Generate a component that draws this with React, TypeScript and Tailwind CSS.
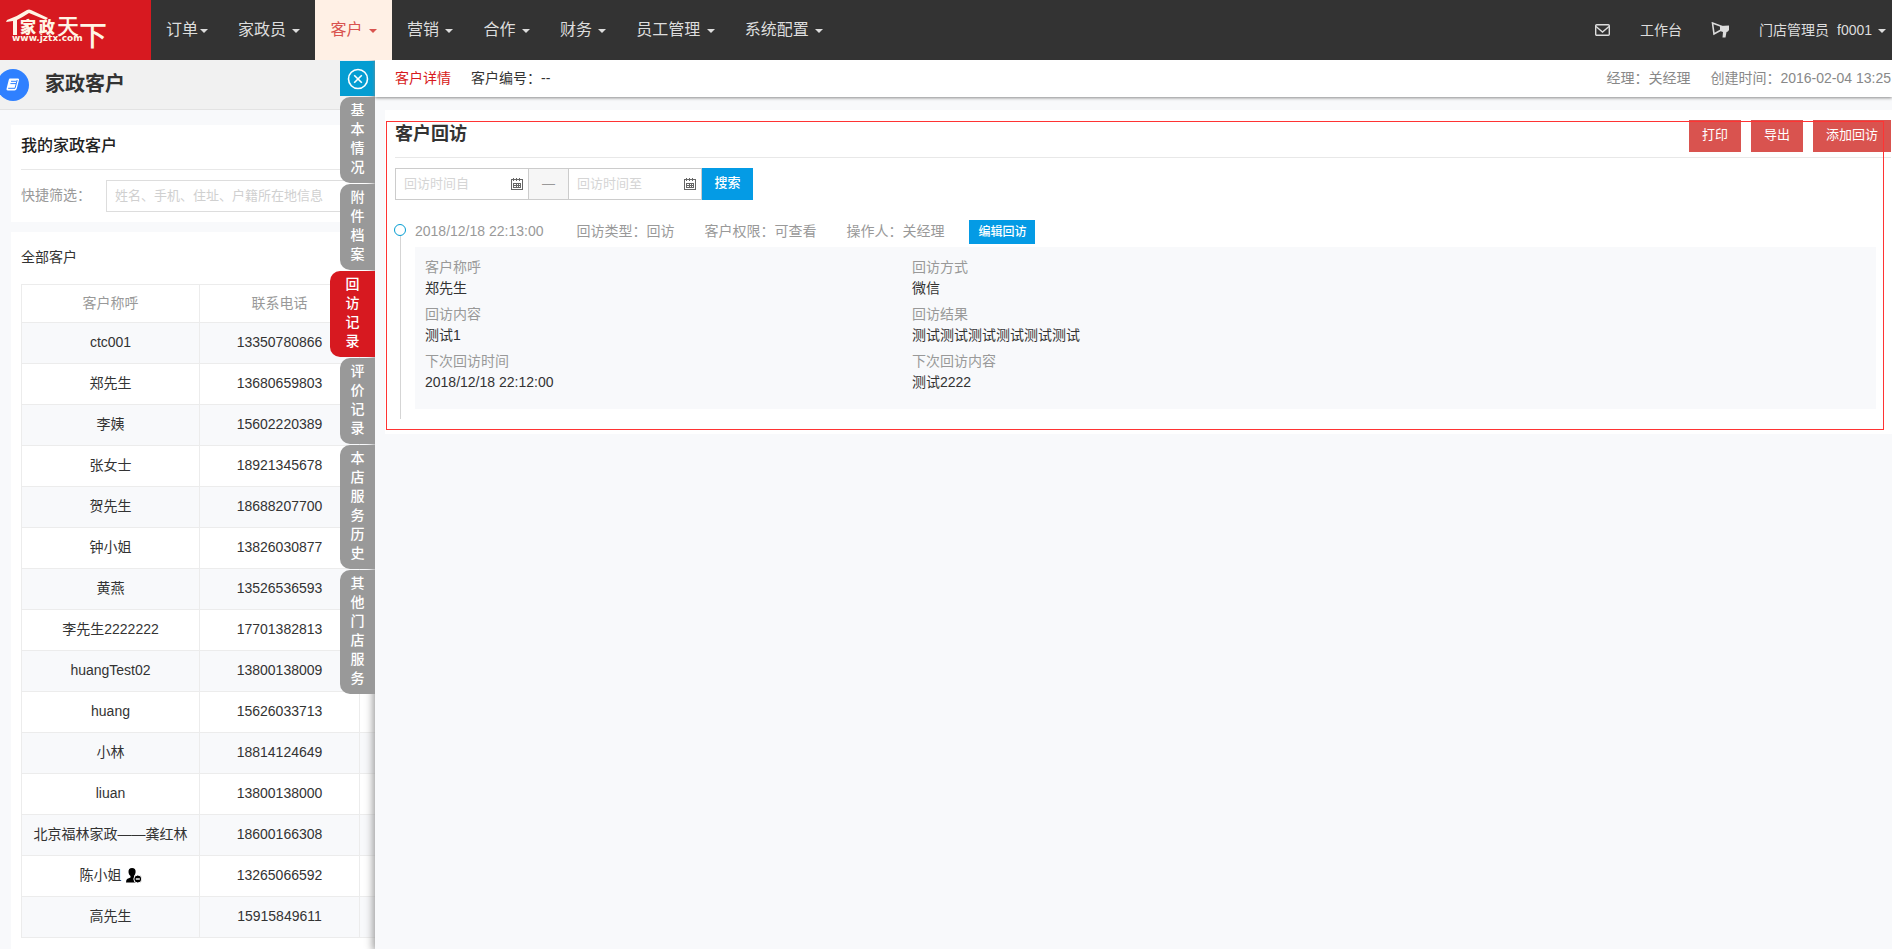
import React, { FC, ReactNode, useState } from "react";
import cx from "clsx";

interface Customer {
  name: string;
  phone: string;
  removed?: boolean;
}

const menus = ["订单", "家政员", "客户", "营销", "合作", "财务", "员工管理", "系统配置"];

const tabs = ["基本情况", "附件档案", "回访记录", "评价记录", "本店服务历史", "其他门店服务"];

const customers: Customer[] = [
  { name: "ctc001", phone: "13350780866" },
  { name: "郑先生", phone: "13680659803" },
  { name: "李姨", phone: "15602220389" },
  { name: "张女士", phone: "18921345678" },
  { name: "贺先生", phone: "18688207700" },
  { name: "钟小姐", phone: "13826030877" },
  { name: "黄燕", phone: "13526536593" },
  { name: "李先生2222222", phone: "17701382813" },
  { name: "huangTest02", phone: "13800138009" },
  { name: "huang", phone: "15626033713" },
  { name: "小林", phone: "18814124649" },
  { name: "liuan", phone: "13800138000" },
  { name: "北京福林家政——龚红林", phone: "18600166308" },
  { name: "陈小姐", phone: "13265066592", removed: true },
  { name: "高先生", phone: "15915849611" },
];

const visit = [
  { label: "客户称呼", value: "郑先生" },
  { label: "回访方式", value: "微信" },
  { label: "回访内容", value: "测试1" },
  { label: "回访结果", value: "测试测试测试测试测试测试" },
  { label: "下次回访时间", value: "2018/12/18 22:12:00" },
  { label: "下次回访内容", value: "测试2222" },
];

const Caret: FC = () => (
  <span className="ml-0.5 inline-block border-x-4 border-t-4 border-x-transparent border-t-current align-middle" />
);

const Logo: FC = () => (
  <svg width="151" height="60" viewBox="0 0 151 60" fill="#fff5e6" role="img" aria-label="家政天下">
    <path d="M6 22 L7 20 Q18 16 27 10 Q29 9 31 10 L48 18 L46 20 L29 13 Q23 17 17 20 L17 35 L13 35 L13 21 Z" />
    <g fontFamily="'Noto Sans CJK SC', sans-serif">
      <text x="20" y="33" fontSize="16" fontWeight="900">家</text>
      <text x="39" y="33" fontSize="16" fontWeight="900">政</text>
      <text x="57" y="34" fontSize="22" fontWeight="500">天</text>
      <text x="79" y="46" fontSize="28" fontWeight="500">下</text>
    </g>
    <text x="12" y="41" fontSize="9" fontWeight="700" fontFamily="'DejaVu Sans', sans-serif">
      www.jztx.com
    </text>
  </svg>
);

const MailIcon: FC = () => (
  <svg width="15" height="12" viewBox="0 0 15 12" fill="none" stroke="currentColor" strokeWidth="1.4">
    <rect x="0.7" y="0.7" width="13.6" height="10.6" rx="1" />
    <path d="M1 2.5 L7.5 8 L14 2.5" />
  </svg>
);

const HornIcon: FC = () => (
  <svg width="19" height="16" viewBox="0 0 19 16">
    <path d="M1.5 1 L3 12 L11 7.5 L11 4.5 Z" fill="none" stroke="currentColor" strokeWidth="1.6" />
    <path d="M9 4 L18 3.5 L18 8 Q17 10 15.5 10 L14.5 15.5 L11.5 15.5 L12 10 L9 9 Z" fill="currentColor" />
  </svg>
);

const BookIcon: FC = () => (
  <svg width="14" height="13" viewBox="0 0 14 13">
    <path d="M4 0.5 H12 Q13.5 0.5 13 2 L10.8 10.5 Q10.3 12.5 8.5 12.5 H1.8 Q0 12.5 0.6 10.5 L2.8 1.8 Q3.1 0.5 4 0.5 Z" fill="#fff" />
    <path d="M5 3.3 H10.6 M4.4 5.6 H10 M2.2 10.3 H9 L11.2 2" fill="none" stroke="#2f80ff" strokeWidth="1" />
  </svg>
);

const CloseIcon: FC = () => (
  <svg width="22" height="22" viewBox="0 0 22 22" fill="none" stroke="#fff" strokeWidth="1.6">
    <circle cx="11" cy="11" r="9.5" />
    <path d="M7.2 7.2 L14.8 14.8 M14.8 7.2 L7.2 14.8" />
  </svg>
);

const CalendarIcon: FC = () => (
  <svg
    className="pointer-events-none absolute top-2.5 right-1.5"
    width="12"
    height="12"
    viewBox="0 0 12 12"
    fill="none"
    stroke="#666"
    shapeRendering="crispEdges"
  >
    <path d="M0.5 1.5 H11.5 V11.5 H0.5 Z" />
    <path d="M2.5 0 V3 M5.5 0 V3 M8.5 0 V3" />
    <path d="M2 5.5 H10 M2 7.5 H10 M2 9.5 H10 M2.5 5 V10 M5.5 5 V10 M7.5 5 V10 M9.5 5 V10" />
  </svg>
);

const UserMinusIcon: FC = () => (
  <svg width="16" height="15" viewBox="0 0 16 15">
    <path
      d="M6 0 C8.5 0 9.8 1.6 9.6 4 C9.5 6 8.6 7 8 8 L8 9 L11 10.5 L11 14.5 H0 Q0 11.5 1.5 10.8 L4.5 9.5 V8 C3.5 7 2.6 6 2.5 4 C2.4 1.6 3.6 0 6 0 Z"
      fill="#000"
    />
    <circle cx="11.8" cy="11" r="4" fill="#000" stroke="#fff" />
    <path d="M9.8 11 H13.8" stroke="#fff" strokeWidth="1.4" />
  </svg>
);

const RedButton: FC<{ children: ReactNode }> = ({ children }) => (
  <button className="h-8 bg-[#d9534f] px-[13px] pb-0.5 text-[13px] text-white">{children}</button>
);

const DateInput: FC<{ label: string }> = ({ label }) => (
  <div className="relative">
    <input
      type="text"
      aria-label={label}
      placeholder={label}
      className="block h-8 w-[134px] border border-[#ccc] bg-white pr-6 pb-0.5 pl-2 text-[13px] outline-none placeholder:text-[#d5d5d5]"
    />
    <CalendarIcon />
  </div>
);

const TopBar: FC = () => (
  <header className="relative z-20 flex h-[60px] shrink-0 bg-[#333] text-[#ddd]">
    <a href="#" className="w-[151px] bg-[#d71920]">
      <Logo />
    </a>
    <nav className="flex text-base">
      {menus.map((menu, i) => (
        <button
          key={menu}
          className={cx(
            "px-[15px] whitespace-nowrap",
            menu === "客户" && "bg-[#fff0e5] text-[#d9534f]"
          )}
        >
          {menu}
          {i > 0 && " "}
          <Caret />
        </button>
      ))}
    </nav>
    <div className="ml-auto flex items-center pr-1.5 text-sm">
      <a href="#" aria-label="消息">
        <MailIcon />
      </a>
      <a href="#" className="ml-[30px]">
        工作台
      </a>
      <a href="#" aria-label="公告" className="ml-[29px]">
        <HornIcon />
      </a>
      <button className="ml-[29px]">
        <span className="mr-2">门店管理员</span>
        f0001 <Caret />
      </button>
    </div>
  </header>
);

const CustomerList: FC = () => (
  <aside className="flex w-[375px] shrink-0 flex-col overflow-hidden">
    <div className="flex h-[50px] shrink-0 items-center border-b border-[#e3e3e3] bg-[#f1f1f1]">
      <span className="-ml-[3px] flex size-8 items-center justify-center rounded-full bg-[#2f80ff]">
        <BookIcon />
      </span>
      <h1 className="ml-4 pb-0.5 text-xl font-bold">家政客户</h1>
    </div>

    <div className="mt-[15px] ml-[11px] h-[97px] shrink-0 bg-white pl-2.5">
      <h2 className="flex h-[45px] items-center border-b border-[#e8e8e8] pb-0.5 text-base font-medium text-[#222]">
        我的家政客户
      </h2>
      <div className="mt-2.5 flex items-center">
        <label htmlFor="quick" className="w-[85px] pb-0.5 text-[#999]">
          快捷筛选：
        </label>
        <input
          id="quick"
          type="text"
          placeholder="姓名、手机、住址、户籍所在地信息"
          className="h-8 min-w-0 flex-1 border border-[#ddd] px-2 pb-0.5 text-[13px] outline-none placeholder:text-[#d0d0d0]"
        />
      </div>
    </div>

    <div className="mt-2.5 ml-[11px] flex-1 bg-white pb-2.5 pl-2.5">
      <h3 className="flex h-[52px] items-center pb-0.5">全部客户</h3>
      <table className="w-[480px] table-fixed border-collapse text-center">
        <thead>
          <tr className="h-[38px] text-[#999]">
            <th className="w-[178px] border border-[#ececec] pb-0.5 font-normal">客户称呼</th>
            <th className="w-40 border border-[#ececec] pb-0.5 font-normal">联系电话</th>
            <th className="border border-[#ececec]" />
          </tr>
        </thead>
        <tbody>
          {customers.map((customer) => (
            <tr key={customer.name} className="h-[41px] odd:bg-[#f8f9fb]">
              <td className="border border-[#ececec] pb-0.5">
                <span className="flex items-center justify-center gap-1">
                  {customer.name}
                  {customer.removed && <UserMinusIcon />}
                </span>
              </td>
              <td className="border border-[#ececec] pb-0.5">{customer.phone}</td>
              <td className="border border-[#ececec]" />
            </tr>
          ))}
        </tbody>
      </table>
    </div>
  </aside>
);

const SideTabs: FC = () => {
  const [active, setActive] = useState("回访记录");

  return (
    <nav className="absolute top-px right-full flex flex-col items-end gap-px">
      <button aria-label="关闭" className="flex size-[35px] items-center justify-center bg-[#049dd2]">
        <CloseIcon />
      </button>
      {tabs.map((tab) => (
        <button
          key={tab}
          onClick={() => setActive(tab)}
          className={cx(
            "rounded-l-[10px] pt-1 pb-1.5 text-sm leading-[19px] font-medium text-white",
            tab === active ? "w-[45px] bg-[#d71920] px-[15px]" : "w-[35px] bg-[#999] px-2.5"
          )}
        >
          {tab}
        </button>
      ))}
    </nav>
  );
};

const VisitPanel: FC = () => (
  <div className="relative mt-[13px] ml-2.5 bg-white pb-[15px] pl-2.5">
    {/* 红色标注框 */}
    <div className="pointer-events-none absolute top-[11px] right-2 bottom-1 left-px border border-[#ff3333]" />

    <div className="mr-px flex h-12 items-start justify-between border-b border-[#e8e8e8] pt-2.5">
      <h2 className="text-lg leading-7 font-bold">客户回访</h2>
      <div className="flex gap-2.5">
        <RedButton>打印</RedButton>
        <RedButton>导出</RedButton>
        <RedButton>添加回访</RedButton>
      </div>
    </div>

    <form className="mt-2.5 flex" onSubmit={(e) => e.preventDefault()}>
      <DateInput label="回访时间自" />
      <span className="flex w-[39px] items-center justify-center border-y border-[#ccc] bg-[#f6f6f6] text-[13px] text-[#999]">
        —
      </span>
      <DateInput label="回访时间至" />
      <button className="w-[51px] bg-[#049be5] pb-0.5 text-[13px] font-medium text-white">搜索</button>
    </form>

    <div className="mt-5 mr-4 flex">
      <div className="-ml-px flex w-[21px] shrink-0 flex-col pt-1">
        <span className="size-3 rounded-full border border-[#049dd2]" />
        <span className="ml-1.5 w-px flex-1 bg-[#d5d5d5]" />
      </div>
      <div className="flex-1 pb-2.5">
        <div className="flex h-[27px] items-start leading-[22px] text-[#999]">
          <span>2018/12/18 22:13:00</span>
          <span className="ml-[33px]">回访类型：回访</span>
          <span className="ml-[30px]">客户权限：可查看</span>
          <span className="ml-[30px]">操作人：关经理</span>
          <button className="ml-[25px] h-6 bg-[#049be5] px-[9px] text-xs font-medium text-white">编辑回访</button>
        </div>
        <dl className="grid grid-cols-3 gap-y-1 bg-[#f8f9fb] pt-[9px] pb-4">
          {visit.map((item, i) => (
            <div key={item.label} className={cx("pl-2.5", i % 2 === 1 && "col-span-2")}>
              <dt className="leading-[22px] text-[#999]">{item.label}</dt>
              <dd className="leading-[21px]">{item.value}</dd>
            </div>
          ))}
        </dl>
      </div>
    </div>
  </div>
);

const CustomerPage: FC = () => {
  return (
    <div className="flex h-screen flex-col overflow-hidden bg-[#f8f9fb] font-['Liberation_Sans','Noto_Sans_CJK_SC',sans-serif] text-sm text-[#333]">
      <TopBar />
      <div className="flex min-h-0 flex-1">
        <CustomerList />
        <main className="relative z-10 min-w-0 flex-1 bg-[#f8f9fb] shadow-[0_0_8px_2px_#999]">
          <SideTabs />
          <div className="relative flex h-[37px] items-center bg-white pr-px pb-0.5 pl-5 shadow-[0_1px_3px_#888]">
            <span className="text-[#d71920]">客户详情</span>
            <span className="ml-5">客户编号：--</span>
            <span className="ml-auto text-[#888]">经理：关经理</span>
            <span className="ml-5 text-[#888]">创建时间：2016-02-04 13:25</span>
          </div>
          <VisitPanel />
        </main>
      </div>
    </div>
  );
};

export default CustomerPage;
